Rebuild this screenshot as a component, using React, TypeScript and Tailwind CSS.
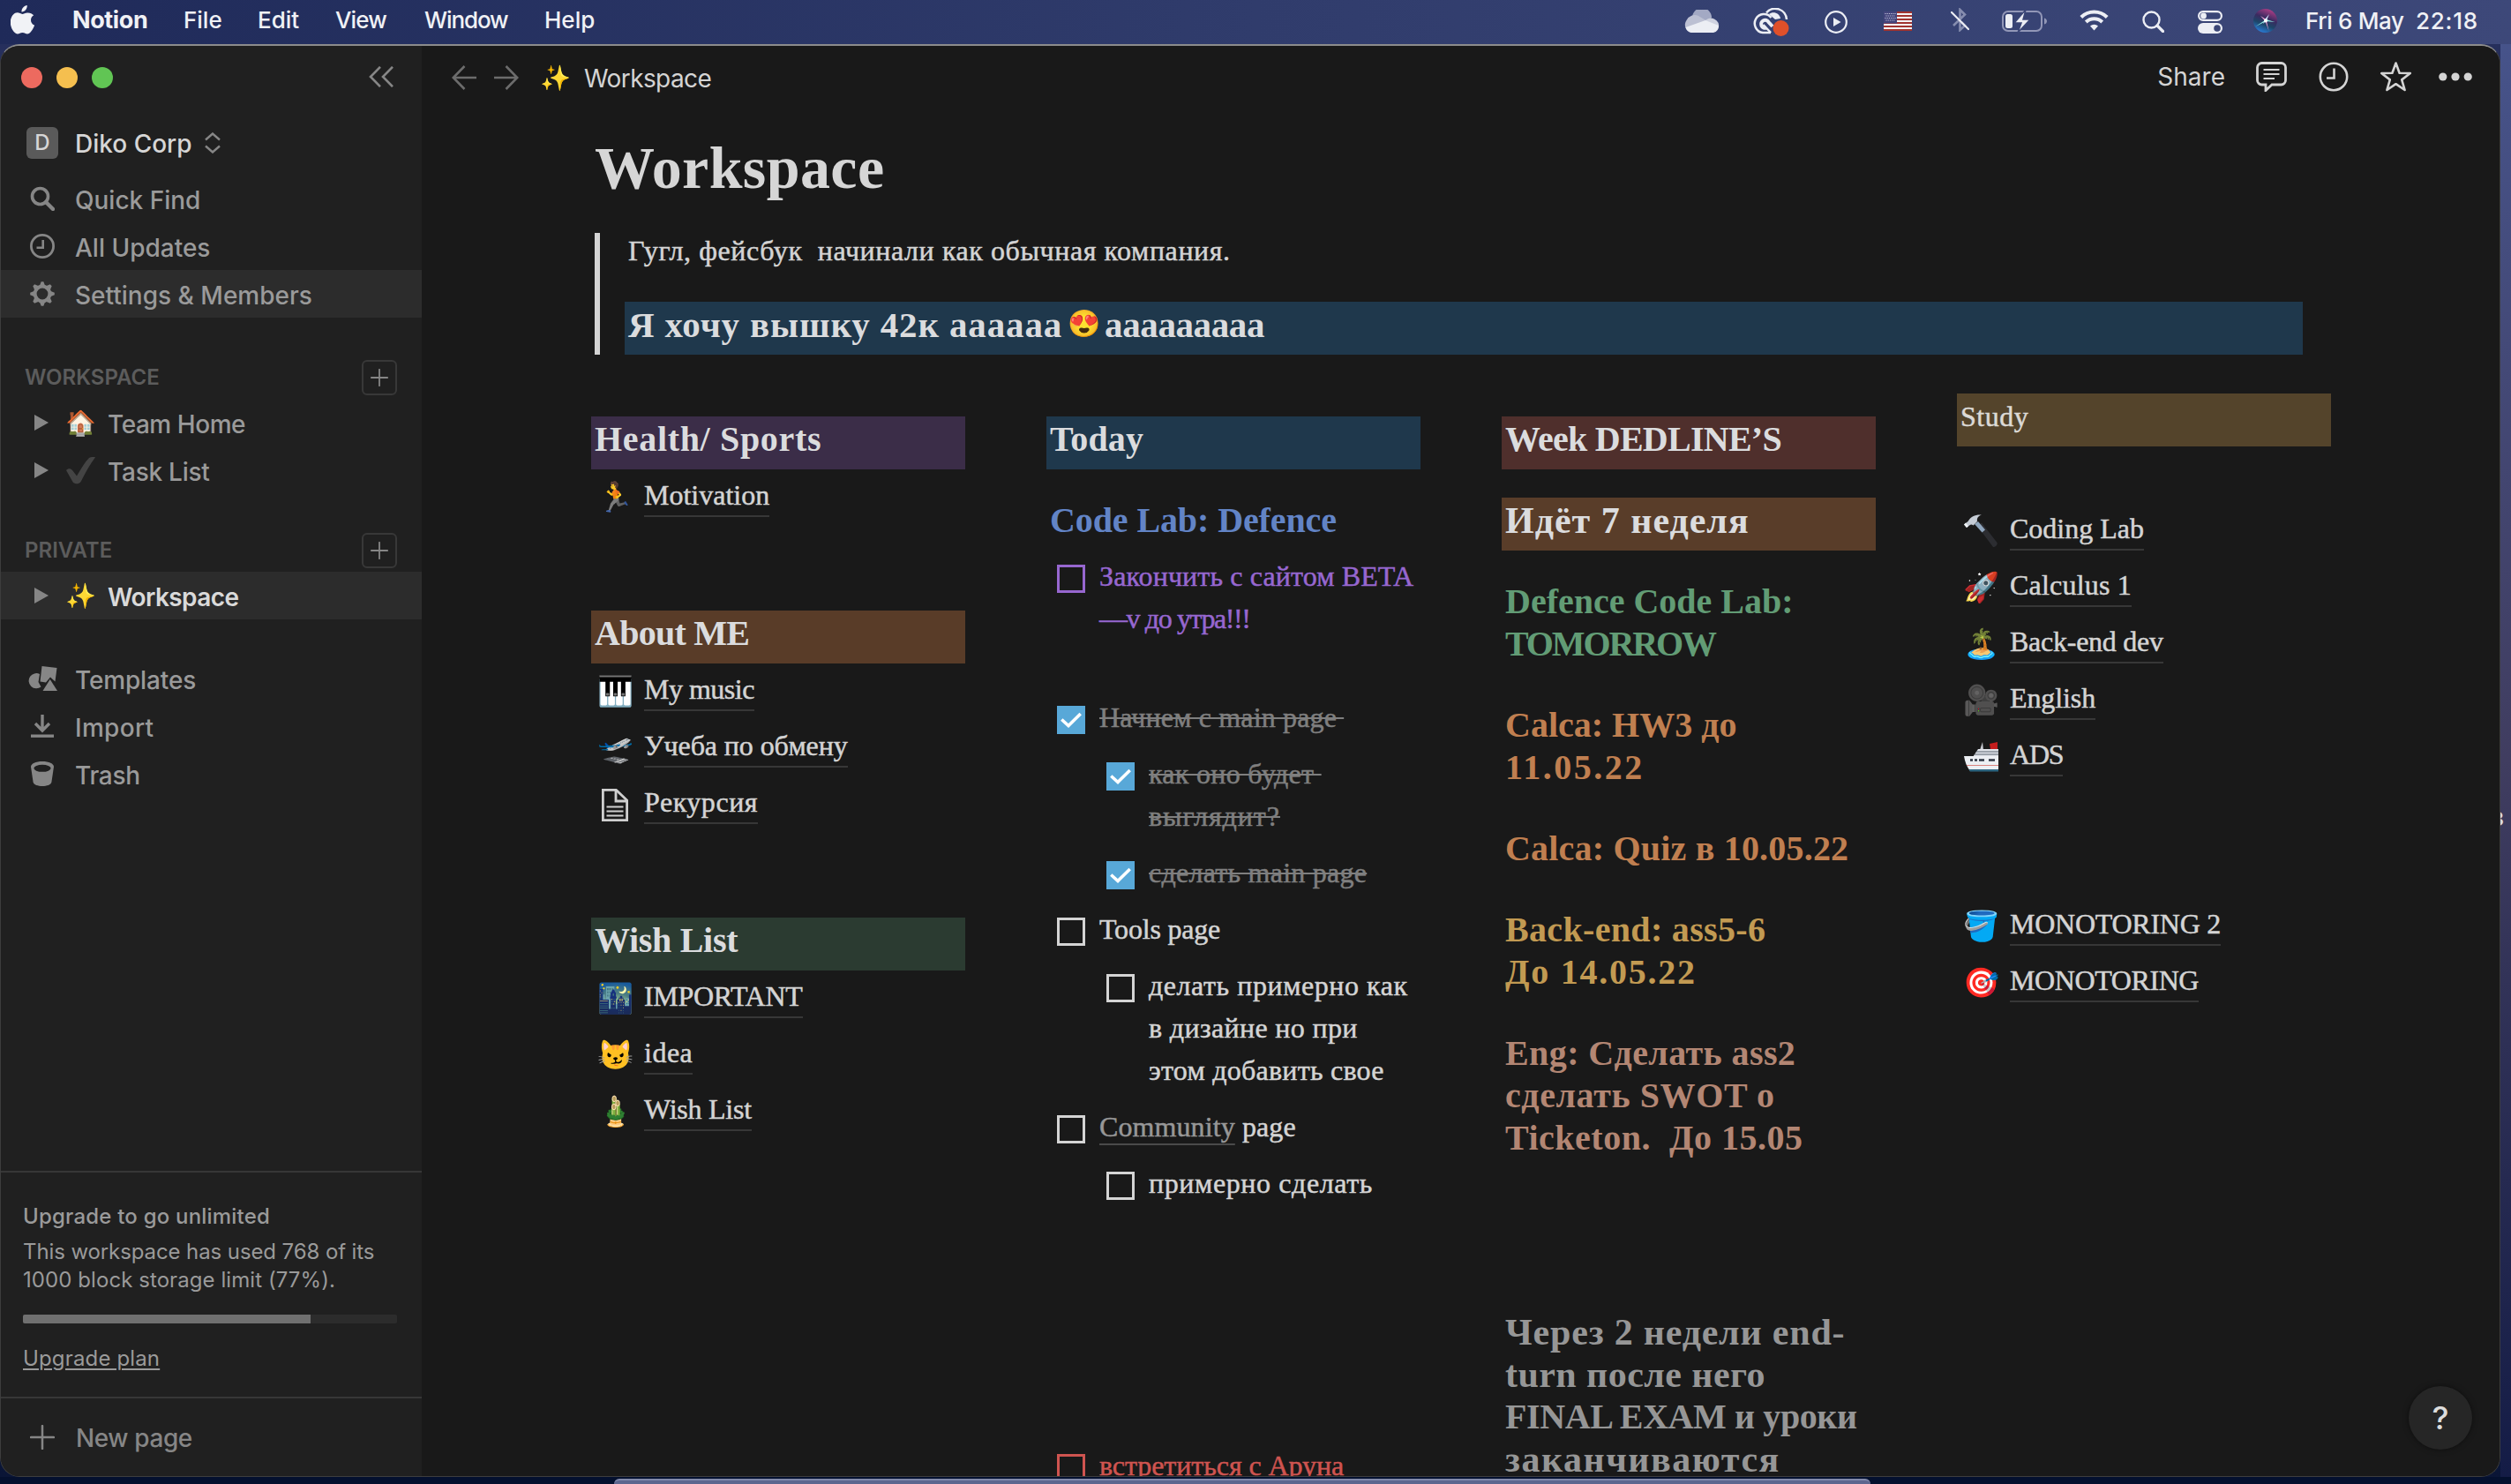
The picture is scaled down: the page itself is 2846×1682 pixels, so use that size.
import type { ReactNode } from 'react';

const SANS = 'font-[Inter,"Liberation_Sans",sans-serif]';
const SERIF = 'font-["Liberation_Serif",serif]';

/* ---------- menu bar icons ---------- */

function AppleLogo() {
  return (
    <svg className="h-[33px] w-[27px]" viewBox="0 0 27 33" fill="#f1f2f6">
      <path d="M18.7 0c.3 2-.5 3.900-1.700 5.300-1.200 1.400-2.900 2.300-4.500 2.200-.3-1.900.6-3.900 1.700-5.100C15.400 1 17.200.1 18.700 0z" />
      <path d="M25.600 11.300c-2 1.200-3.200 3-3.200 5.400 0 2.700 1.600 4.900 4.100 5.900-.6 1.900-1.500 3.700-2.600 5.400-1.500 2.200-3 4.400-5.400 4.400-2.300 0-3-1.400-5.600-1.400-2.600 0-3.500 1.400-5.700 1.400-2.300 0-3.900-2.100-5.500-4.400C.1 25.400-1 21.600-1 18.400.1 12 3.300 8.400 7 8.300c2.300 0 4.200 1.600 5.700 1.600 1.400 0 3.600-1.700 6.300-1.500 2.700.1 5 1.200 6.600 2.900z" transform="translate(.6 0)" />
    </svg>
  );
}

function CloudIcon() {
  return (
    <svg className="h-[26px] w-[40px]" viewBox="0 0 40 26">
      <path d="M9 9a11 11 0 0 1 22 0l-8 6z" fill="#a3a9c4" />
      <path d="M8 26a9 9 0 0 1-5.500-14A10 10 0 0 1 16 7l15 9L12 26z" fill="#bcc0d3" />
      <path d="M24 12a9 9 0 0 1 15 8l-6 3z" fill="#cfd2e0" />
      <path d="M1.500 20 24 12l15 6a8 8 0 0 1-6 8H8a8 8 0 0 1-6.500-6z" fill="#eceef4" />
    </svg>
  );
}

function CreativeCloudIcon() {
  return (
    <svg className="h-[32px] w-[41px]" viewBox="0 0 41 32" fill="none">
      <path d="M15 5.500A13 13 0 0 1 38 13" stroke="#eceef4" strokeWidth="2.500" />
      <path d="M18 7c5-4 12-1 13 5l-6 1z" fill="#eceef4" />
      <path d="M20 28h-9A10.500 10.500 0 1 1 20.500 11" stroke="#eceef4" strokeWidth="2.500" />
      <path d="M20 28l-8.500-9" stroke="#eceef4" strokeWidth="2.500" />
      <path d="M15 22.500a4.500 4.500 0 1 1 2.500-6.500L22 21" stroke="#eceef4" strokeWidth="4" />
      <circle cx="31.500" cy="23" r="9" fill="#e0502a" />
    </svg>
  );
}

function PlayIcon() {
  return (
    <svg className="h-[26px] w-[26px]" viewBox="0 0 26 26">
      <circle cx="13" cy="13" r="11.800" fill="none" stroke="#eceef4" strokeWidth="2.200" />
      <path d="M10 8l8.500 5L10 18z" fill="#eceef4" />
    </svg>
  );
}

function FlagIcon() {
  return (
    <svg className="h-[22px] w-[32px]" viewBox="0 0 32 22">
      <path d="M0 0h32v22H0z" fill="#f4f4f6" />
      <path d="M0 .9h32M0 4.900h32M0 8.900h32M0 12.900h32M0 16.900h32M0 21h32" stroke="#a0332f" strokeWidth="2" />
      <path d="M0 0h15v13.500H0z" fill="#43457c" />
      <path d="M1.500 2.500h12M2.500 5h11M1.500 7.500h12M2.500 10h11" stroke="#d8daea" strokeWidth="1" strokeDasharray="1 1.200" />
    </svg>
  );
}

function BluetoothOffIcon() {
  return (
    <svg className="h-[27px] w-[21px]" viewBox="0 0 21 27" fill="none">
      <path d="M3 20 16 7.500 10.500 2v23L16 20l-4-4" stroke="#868daf" strokeWidth="2.600" />
      <path d="M1 5l19 19" stroke="#eceef4" strokeWidth="2.200" strokeLinecap="round" />
    </svg>
  );
}

function BatteryIcon() {
  return (
    <svg className="h-[26px] w-[51px]" viewBox="0 0 51 26">
      <rect x="1" y="2" width="44" height="22" rx="6" fill="none" stroke="#9297b7" strokeWidth="2" />
      <path d="M48 9.500c2 .5 3 2 3 3.500s-1 3-3 3.500z" fill="#9297b7" />
      <rect x="4" y="5" width="8" height="16" rx="2.500" fill="#eceef4" />
      <path d="M27 0 14 15h8l-4 11 14-15h-8l3-11z" fill="#eceef4" stroke="#3b4676" strokeWidth="1.500" />
    </svg>
  );
}

function WifiIcon() {
  return (
    <svg className="h-[24px] w-[33px]" viewBox="0 0 33 24" fill="none" stroke="#eceef4" strokeWidth="4">
      <path d="M1.800 8.500a21 21 0 0 1 29.400 0" />
      <path d="M7.300 14a13 13 0 0 1 18.400 0" />
      <path d="M12 18.500a6.500 6.500 0 0 1 9 0L16.500 23.500z" fill="#eceef4" stroke="none" />
    </svg>
  );
}

function MenuSearchIcon() {
  return (
    <svg className="h-[25px] w-[25px]" viewBox="0 0 25 25" fill="none" stroke="#eceef4">
      <circle cx="10.500" cy="10.500" r="9" strokeWidth="2.400" />
      <path d="M17 17l6.500 6.500" strokeWidth="3.200" strokeLinecap="round" />
    </svg>
  );
}

function ControlCenterIcon() {
  return (
    <svg className="h-[26px] w-[28px]" viewBox="0 0 28 26">
      <rect x="1.100" y="1.100" width="25.800" height="9.800" rx="4.900" fill="none" stroke="#eceef4" strokeWidth="2.200" />
      <circle cx="6.500" cy="6" r="3.400" fill="#eceef4" />
      <rect x="0" y="14" width="28" height="12" rx="6" fill="#eceef4" />
      <circle cx="22" cy="20" r="3.800" fill="#3b4676" />
    </svg>
  );
}

function SiriIcon() {
  return (
    <svg className="h-[27px] w-[27px]" viewBox="0 0 27 27">
      <defs>
        <linearGradient id="orb" x1=".7" y1="0" x2=".3" y2="1">
          <stop offset="0" stopColor="#b23f88" />
          <stop offset=".4" stopColor="#3a2a60" />
          <stop offset=".65" stopColor="#1d4668" />
          <stop offset="1" stopColor="#2b80e0" />
        </linearGradient>
      </defs>
      <circle cx="13.500" cy="13.500" r="13.500" fill="url(#orb)" />
      <path d="M2.500 20l12-8 10 3-10-1z" fill="#8ff0e6" />
      <path d="M8 8l6.500 4 3 13-4-11z" fill="#f3a0d6" />
      <path d="M18 6l-3 7-4 4 2-5z" fill="#cfe6ff" />
      <circle cx="14" cy="13.500" r="2" fill="#fff" />
    </svg>
  );
}

/* ---------- sidebar icons ---------- */

const GRAY = '#868686';

function SearchIcon() {
  return (
    <svg className="size-7" viewBox="0 0 28 28" fill="none" stroke={GRAY}>
      <circle cx="11.500" cy="11.500" r="9" strokeWidth="3.600" />
      <path d="M18 18l8 8" strokeWidth="4.400" strokeLinecap="round" />
    </svg>
  );
}

function UpdatesIcon() {
  return (
    <svg className="size-7" viewBox="0 0 28 28" fill="none" stroke={GRAY}>
      <circle cx="14" cy="14" r="12.600" strokeWidth="2.800" />
      <path d="M14.700 7v8.700H7.500" strokeWidth="2.600" />
    </svg>
  );
}

const TEETH = ['rotate(0 14 14)', 'rotate(45 14 14)', 'rotate(90 14 14)', 'rotate(135 14 14)', 'rotate(180 14 14)', 'rotate(225 14 14)', 'rotate(270 14 14)', 'rotate(315 14 14)'];

function GearIcon() {
  return (
    <svg className="size-7" viewBox="0 0 28 28" fill={GRAY}>
      <circle cx="14" cy="14" r="8.400" fill="none" stroke={GRAY} strokeWidth="4" />
      {TEETH.map((t) => (
        <path key={t} d="M10.800 5 12.700.2h2.600L17.200 5z" transform={t} />
      ))}
    </svg>
  );
}

function TemplatesIcon() {
  return (
    <svg className="h-7 w-[33px]" viewBox="0 0 33 28" fill={GRAY}>
      <path d="M13 9a8.600 8.600 0 1 0 1.500 14.500L11.500 18z" />
      <path d="M15.500 0 32.500 2 30.500 17.500 25 12.500 20 18.500 13.500 17.500z" />
      <path d="M24.700 15 33 28H16.500z" />
    </svg>
  );
}

function ImportIcon() {
  return (
    <svg className="size-[26px]" viewBox="0 0 26 26" fill="none" stroke={GRAY} strokeWidth="3.400">
      <path d="M13 0v18M5 10l8 8 8-8" />
      <path d="M0 24.200h26" />
    </svg>
  );
}

function TrashIcon() {
  return (
    <svg className="h-7 w-[26px]" viewBox="0 0 26 28">
      <path d="M13 0c7.500 0 13 2.600 13 6l-2.600 17.500C22.800 26.500 18 28 13 28S3.200 26.500 2.600 23.500L0 6c0-3.400 5.500-6 13-6z" fill={GRAY} />
      <ellipse cx="13" cy="7.800" rx="9.600" ry="4" fill="#202020" />
    </svg>
  );
}

function PlusIcon({ size }: { size: string }) {
  return (
    <svg className={size} viewBox="0 0 20 20" stroke={GRAY} strokeWidth="1.800" strokeLinecap="round">
      <path d="M10 .8v18.400M.8 10h18.400" />
    </svg>
  );
}

function Triangle() {
  return (
    <svg className="h-[18px] w-4" viewBox="0 0 16 18" fill={GRAY}>
      <path d="M0 0l16 9-16 9z" />
    </svg>
  );
}

/* ---------- sidebar ---------- */

function NavRow({ icon, label, active, text }: { icon: ReactNode; label: string; active?: boolean; text?: string }) {
  return (
    <div className={`flex h-[54px] items-center ${active ? 'bg-[#2c2c2c]' : ''}`}>
      <div className="ml-[27px] flex w-[40px] justify-center">{icon}</div>
      <span className={`ml-[17px] mt-[3px] text-[28px] font-medium text-[#9a9a9a] ${text ?? ''}`}>{label}</span>
    </div>
  );
}

function TreeRow({ icon, label, active, text }: { icon: ReactNode; label: string; active?: boolean; text: string }) {
  return (
    <div className={`flex h-[54px] items-center ${active ? 'bg-[#2c2c2c]' : ''}`}>
      <div className="ml-[38px]">
        <Triangle />
      </div>
      <div className="ml-[16px] flex w-[40px] justify-center text-[28px] leading-none">{icon}</div>
      <span className={`ml-[11px] mt-[3px] text-[28px] ${text}`}>{label}</span>
    </div>
  );
}

function SectionHeader({ label }: { label: string }) {
  return (
    <div className="flex h-10 items-center justify-between pl-[27px] pr-[28px]">
      <span className="text-[24px] font-semibold text-[#5c5c5c]">{label}</span>
      <div className="flex size-10 items-center justify-center rounded-[6px] border-2 border-[#383838]">
        <PlusIcon size="size-5" />
      </div>
    </div>
  );
}

function Sidebar() {
  return (
    <aside className={`flex w-[477px] shrink-0 flex-col bg-[#202020] ${SANS}`}>
      <div className="flex h-[72px] items-center justify-between pl-[23px] pr-[32px]">
        <div className="flex gap-4">
          <div className="size-6 rounded-full bg-[#ed6a5f]" />
          <div className="size-6 rounded-full bg-[#f5bf4f]" />
          <div className="size-6 rounded-full bg-[#61c554]" />
        </div>
        <svg className="mt-[-3px] h-6 w-7" viewBox="0 0 28 24" fill="none" stroke={GRAY} strokeWidth="2.600">
          <path d="M13 .8 2 12l11 11.200M27 .8 16 12l11 11.200" />
        </svg>
      </div>

      <div className="flex h-[74px] items-center pl-[29px] pt-[2px]">
        <div className="flex size-9 items-center justify-center rounded-[6px] bg-[#5a5a5a] text-[24px] font-medium text-[#d6d6d6]">D</div>
        <span className="ml-[19px] mt-px text-[28px] font-medium text-[#d6d6d6]">Diko Corp</span>
        <svg className="ml-[14px] h-6 w-[18px]" viewBox="0 0 18 24" fill="none" stroke={GRAY} strokeWidth="2.400">
          <path d="M1 8.500 9 1.500l8 7M1 15.500l8 7 8-7" />
        </svg>
      </div>

      <NavRow icon={<SearchIcon />} label="Quick Find" />
      <NavRow icon={<UpdatesIcon />} label="All Updates" />
      <NavRow icon={<GearIcon />} label="Settings & Members" active />

      <div className="mt-12">
        <SectionHeader label="WORKSPACE" />
        <div className="mt-1">
          <TreeRow icon="🏠" label="Team Home" text="font-medium text-[#9a9a9a] tracking-[-0.45px]" />
          <TreeRow
            icon={
              <svg className="h-[31px] w-[33px]" viewBox="0 0 33 31" fill="#444">
                <path d="M0 15c2-2.500 5-2.500 7 0l5 6.500C17 13 21 6 26 1c2-1.200 5-1.200 7-.8-6 8-11 17-16 27-2 4-7 4-9.500 1z" />
              </svg>
            }
            label="Task List"
            text="font-medium text-[#9a9a9a] tracking-[-0.25px]"
          />
        </div>
      </div>

      <div className="mt-11">
        <SectionHeader label="PRIVATE" />
        <div className="mt-1">
          <TreeRow icon="✨" label="Workspace" active text="font-semibold text-[#dadada] tracking-[-0.6px]" />
        </div>
      </div>

      <div className="mt-10">
        <NavRow icon={<TemplatesIcon />} label="Templates" text="tracking-[-0.15px]" />
        <NavRow icon={<ImportIcon />} label="Import" text="tracking-[0.3px]" />
        <NavRow icon={<TrashIcon />} label="Trash" text="tracking-[-0.3px]" />
      </div>

      <div className="mt-auto h-[256px] border-t-2 border-[#373737] pl-[25px] pt-[34px] text-[24px] leading-8 text-[#9a9a9a]">
        <div className="font-medium tracking-[0.2px]">Upgrade to go unlimited</div>
        <div className="mt-2 whitespace-nowrap tracking-[-0.1px]">This workspace has used 768 of its</div>
        <div className="whitespace-nowrap tracking-[0.07px]">1000 block storage limit (77%).</div>
        <div className="mt-[23px] h-[10px] w-[424px] overflow-hidden rounded-[2px] bg-[#2c2c2c]">
          <div className="h-full w-[77%] bg-[#707070]" />
        </div>
        <div className="mt-6 tracking-[0.15px] underline decoration-2 underline-offset-[3px]">Upgrade plan</div>
      </div>
      <div className="flex h-[90px] items-center border-t-2 border-[#373737] pl-[33px] text-[28px] font-medium text-[#868686]">
        <PlusIcon size="size-7" />
        <span className="ml-[24px] mt-0.5 tracking-[-0.4px]">New page</span>
      </div>
    </aside>
  );
}

/* ---------- page blocks ---------- */

function Heading({ lines, color = 'text-[#dbdcde]', bg = '' }: { lines: [string, string][]; color?: string; bg?: string }) {
  return (
    <div className={`pb-[10px] pl-1 pt-[2px] text-[40px] font-bold leading-[48px] ${color} ${bg}`}>
      {lines.map(([text, tracking]) => (
        <div key={text} className={`whitespace-pre ${tracking}`}>
          {text}
        </div>
      ))}
    </div>
  );
}

function PageLink({ icon, label, text = '' }: { icon: ReactNode; label: string; text?: string }) {
  return (
    <div className="flex h-16 items-start">
      <div className="ml-[6px] mt-[12px] flex h-10 w-[42px] items-center justify-center text-[33px] leading-none">{icon}</div>
      <span className={`ml-3 mt-[5px] h-[49px] whitespace-nowrap border-b-2 border-[#373737] text-[32px] leading-[48px] text-[#d4d4d4] [-webkit-text-stroke:0.5px] ${text}`}>{label}</span>
    </div>
  );
}

function Todo({ lines, checked, nested, box = 'border-[#d4d4d4]', color = 'text-[#d4d4d4]' }: { lines: [ReactNode, string][]; checked?: boolean; nested?: boolean; box?: string; color?: string }) {
  return (
    <div className={`flex items-start pb-[19px] ${nested ? 'pl-[68px]' : 'pl-[12px]'}`}>
      {checked ? (
        <div className="mt-2 flex size-8 shrink-0 items-center justify-center bg-[#58a8d8]">
          <svg className="h-[18px] w-6" viewBox="0 0 24 18" fill="none" stroke="#fff" strokeWidth="3.600">
            <path d="M1.300 8.500 9 15.500 22.700 2" />
          </svg>
        </div>
      ) : (
        <div className={`mt-2 size-8 shrink-0 border-[3px] ${box}`} />
      )}
      <div className={`-mt-[3px] ml-4 text-[32px] leading-[48px] [-webkit-text-stroke:0.5px] ${checked ? 'text-[#7f7f7f]' : color}`}>
        {lines.map(([text, tracking], i) => (
          <div key={i} className={`whitespace-pre ${tracking}`}>
            {checked ? <span className="line-through decoration-2">{text}</span> : text}
          </div>
        ))}
      </div>
    </div>
  );
}

function DocIcon() {
  return (
    <svg className="h-[37px] w-[30px]" viewBox="0 0 30 37" fill="none" stroke="#cfcfcf" strokeWidth="2.800">
      <path d="M1.400 1.400h15L28.600 13v22.600H1.400z" />
      <path d="M16 1.400V14h12.600" />
      <path d="M5.500 20.500h19M5.500 25.500h19M5.500 30.500h19" strokeWidth="2.200" />
    </svg>
  );
}

function HammerIcon() {
  return (
    <svg className="h-[38px] w-[40px]" viewBox="0 0 40 38">
      <path d="M16 13 21 9.500 38.500 32c1 2-2 5.500-4.500 5z" fill="#2c2d31" />
      <path d="M13 11l4-3 8 9.500-3.500 3z" fill="#8fa6bd" />
      <path d="M1 11.500 5.500 8C9 2 14 0 21 0.500 17 2 15.500 4 16 8l-4.500 4.500C9 10.500 8 11.500 4 15z" fill="#c5ccd5" />
      <path d="M1 11.500 3 9.500l3 4-2 1.500z" fill="#eef1f4" />
    </svg>
  );
}

function ShipIcon() {
  return (
    <svg className="h-[36px] w-[40px]" viewBox="0 0 40 36">
      <path d="M30 3l9-2v8h-8z" fill="#c41d1d" />
      <path d="M19 10l3-9 1 9z" fill="#c9ccd2" />
      <path d="M17 9h23v9H11z" fill="#dfe2e8" />
      <path d="M15 12h25M13 15h27" stroke="#5b6470" strokeWidth="1.200" />
      <path d="M1 17h39v17H8C4 29 2 23 1 17z" fill="#eceff3" />
      <path d="M8 21.500h3M13 21.500h3M18 21.500h6M29 21.500h7" stroke="#2b3340" strokeWidth="2.600" />
      <path d="M4 27.500h36" stroke="#d9837f" strokeWidth="1" />
      <path d="M6.500 32H40v2.500H8z" fill="#2c6580" />
    </svg>
  );
}

function HealthColumn() {
  return (
    <div className="w-[424px] shrink-0 pt-[26px]">
      <Heading lines={[['Health/ Sports', 'tracking-[0.67px]']]} bg="bg-[#3b2d48]" />
      <PageLink icon="🏃" label="Motivation" />
      <div className="mt-24">
        <Heading lines={[['About ME', 'tracking-[-0.75px]']]} bg="bg-[#593c28]" />
        <PageLink icon="🎹" label="My music" text="tracking-[-0.5px]" />
        <PageLink icon="🛫" label="Учеба по обмену" text="tracking-[-0.1px]" />
        <PageLink icon={<DocIcon />} label="Рекурсия" text="tracking-[0.55px]" />
      </div>
      <div className="mt-24">
        <Heading lines={[['Wish List', 'tracking-[-0.3px]']]} bg="bg-[#2b3b31]" />
        <PageLink icon="🌃" label="IMPORTANT" text="tracking-[-0.3px]" />
        <PageLink icon="😼" label="idea" text="tracking-[0.5px]" />
        <PageLink icon="🎍" label="Wish List" text="tracking-[-0.25px]" />
      </div>
    </div>
  );
}

function TodayColumn() {
  return (
    <div className="w-[424px] shrink-0 pt-[26px]">
      <Heading lines={[['Today', 'tracking-[0.2px]']]} bg="bg-[#1f384c]" />
      <div className="mt-8">
        <Heading lines={[['Code Lab: Defence', 'tracking-[-0.1px]']]} color="text-[#6284c6]" />
      </div>
      <div className="mt-2">
        <Todo
          box="border-[#9767d0]"
          color="text-[#9767d0]"
          lines={[
            ['Закончить с сайтом BETA', 'tracking-[0.12px]'],
            ['—v до утра!!!', 'tracking-[-1.4px]'],
          ]}
        />
      </div>
      <div className="mt-12">
        <Todo checked lines={[['Начнем с main page ', 'tracking-[0.15px]']]} />
        <Todo
          checked
          nested
          lines={[
            ['как оно будет ', 'tracking-[0.3px]'],
            ['выглядит?', 'tracking-[0.95px]'],
          ]}
        />
        <Todo checked nested lines={[['сделать main page', 'tracking-[0.25px]']]} />
        <Todo lines={[['Tools page', 'tracking-[-0.2px]']]} />
        <Todo
          nested
          lines={[
            ['делать примерно как', 'tracking-[0.55px]'],
            ['в дизайне но при', 'tracking-[0.35px]'],
            ['этом добавить свое', 'tracking-[0.25px]'],
          ]}
        />
        <Todo
          lines={[
            [
              <>
                <span className="text-[#979797] underline decoration-[#4a4a4a] decoration-2 underline-offset-[8px]">Community</span> page
              </>,
              'tracking-[0.1px]',
            ],
          ]}
        />
        <Todo nested lines={[['примерно сделать', 'tracking-[0.6px]']]} />
      </div>
      <div className="mt-[256px]">
        <Todo box="border-[#cf5450]" color="text-[#cf5450]" lines={[['встретиться с Аруна', 'tracking-[-0.07px]']]} />
      </div>
    </div>
  );
}

function WeekColumn() {
  return (
    <div className="flex w-[424px] shrink-0 flex-col gap-8 pt-[26px]">
      <Heading lines={[['Week DEDLINE’S', 'tracking-[-0.75px]']]} bg="bg-[#4f2f2c]" />
      <Heading lines={[['Идёт 7 неделя', 'text-[42px] tracking-[1px]']]} bg="bg-[#593d29]" />
      <Heading
        color="text-[#629c75]"
        lines={[
          ['Defence Code Lab:', ''],
          ['TOMORROW', 'tracking-[-2.1px]'],
        ]}
      />
      <Heading
        color="text-[#c07f50]"
        lines={[
          ['Calca: HW3 до', ''],
          ['11.05.22', 'tracking-[2.5px]'],
        ]}
      />
      <Heading color="text-[#c07f50]" lines={[['Calca: Quiz в 10.05.22', 'tracking-[0.2px]']]} />
      <Heading
        color="text-[#c29a52]"
        lines={[
          ['Back-end: ass5-6', 'tracking-[0.33px]'],
          ['До 14.05.22', 'tracking-[1.75px]'],
        ]}
      />
      <Heading
        color="text-[#b38673]"
        lines={[
          ['Eng: Сделать ass2', 'tracking-[0.4px]'],
          ['сделать SWOT о', 'tracking-[0.6px]'],
          ['Ticketon.  До 15.05', 'tracking-[0.5px]'],
        ]}
      />
      <div className="mt-32">
        <Heading
          color="text-[#969696]"
          lines={[
            ['Через 2 недели end-', 'text-[42px] tracking-[0.8px]'],
            ['turn после него', 'text-[42px] tracking-[0.45px]'],
            ['FINAL EXAM и уроки', 'tracking-[-0.4px]'],
            ['заканчиваются', 'text-[42px] tracking-[1.5px]'],
          ]}
        />
      </div>
    </div>
  );
}

function StudyColumn() {
  return (
    <div className="w-[424px] shrink-0">
      <div className="h-[60px] bg-[#54442b] pl-1 pt-[2px] text-[32px] leading-[48px] tracking-[0.5px] text-[#dcdad6] [-webkit-text-stroke:0.5px]">Study</div>
      <div className="mt-16">
        <PageLink icon={<HammerIcon />} label="Coding Lab" />
        <PageLink icon="🚀" label="Calculus 1" text="tracking-[0.2px]" />
        <PageLink icon="🏝️" label="Back-end dev" text="tracking-[-0.25px]" />
        <PageLink icon="🎥" label="English" text="tracking-[-0.1px]" />
        <PageLink icon={<ShipIcon />} label="ADS" text="tracking-[-1.2px]" />
      </div>
      <div className="mt-32">
        <PageLink icon="🪣" label="MONOTORING 2" text="tracking-[-0.25px]" />
        <PageLink icon="🎯" label="MONOTORING" text="tracking-[-0.4px]" />
      </div>
    </div>
  );
}

function TopBar() {
  return (
    <div className={`flex h-[72px] shrink-0 items-center pl-[34px] pr-[31px] text-[28px] text-[#d4d4d4] ${SANS}`}>
      <svg className="h-7 w-7" viewBox="0 0 28 28" fill="none" stroke="#6c6c6c" strokeWidth="2.600">
        <path d="M28 14H2M14.500 1 1.800 14l12.700 13" />
      </svg>
      <svg className="ml-5 h-7 w-7" viewBox="0 0 28 28" fill="none" stroke="#6c6c6c" strokeWidth="2.600">
        <path d="M0 14h26M13.500 1l12.700 13-12.700 13" />
      </svg>
      <span className="ml-[21px] flex w-[40px] justify-center text-[28px] leading-none">✨</span>
      <span className="ml-[13px] mt-px tracking-[-0.6px]">Workspace</span>
      <div className="mb-[3px] ml-auto flex items-center">
        <span className="mr-[35px]">Share</span>
        <svg className="h-[34px] w-[35px]" viewBox="0 0 35 34" fill="none" stroke="#d4d4d4">
          <path d="M6.500 1.500h22a5 5 0 0 1 5 5v14.500a5 5 0 0 1-5 5H18l-7 6.500V26H6.500a5 5 0 0 1-5-5V6.500a5 5 0 0 1 5-5z" strokeWidth="2.800" />
          <path d="M8.500 9h18M8.500 14h18M8.500 19h12.500" strokeWidth="2.200" />
        </svg>
        <svg className="ml-[36px] h-[34px] w-[34px]" viewBox="0 0 34 34" fill="none" stroke="#d4d4d4" strokeWidth="2.600">
          <circle cx="17" cy="17" r="15.200" />
          <path d="M17.500 7.500V18.500H9" />
        </svg>
        <svg className="ml-[35px] h-[36px] w-[37px]" viewBox="0 0 37 36" fill="none" stroke="#d4d4d4" strokeWidth="2.600" strokeLinejoin="round">
          <path d="M18.500 2.500 22.600 13.700 34.800 14 25.200 21.400 28.600 33 18.500 26.200 8.400 33 11.800 21.400 2.200 14 14.400 13.700z" />
        </svg>
        <svg className="ml-[30px] h-[10px] w-[38px]" viewBox="0 0 38 10" fill="#d4d4d4">
          <circle cx="4.800" cy="5" r="4.600" />
          <circle cx="19" cy="5" r="4.600" />
          <circle cx="33.200" cy="5" r="4.600" />
        </svg>
      </div>
    </div>
  );
}

function Main() {
  return (
    <main className={`relative flex min-w-0 flex-1 flex-col overflow-hidden bg-[#191919] ${SERIF}`}>
      <TopBar />
      <div className="h-0 flex-1 pl-[192px] pt-[26px]">
        <h1 className="pl-1 text-[68px] font-bold leading-[80px] tracking-[0.4px] text-[#d6d6d6]">Workspace</h1>
        <div className="ml-1 mt-[34px] flex h-[138px] w-[1936px]">
          <div className="w-[6px] bg-[#d4d4d4]" />
          <div className="ml-[28px] flex-1">
            <div className="-mt-[4px] h-[48px] whitespace-pre pl-1 text-[32px] leading-[48px] tracking-[0.58px] text-[#d4d4d4] [-webkit-text-stroke:0.5px]">
              Гугл, фейсбук  начинали как обычная компания.
            </div>
            <div className="mt-[34px] flex h-[60px] bg-[#1f384c] pl-1 pt-[2px] text-[41px] font-bold leading-[48px] text-[#dbdcde]">
              <span className="tracking-[0.85px]">Я хочу вышку 42к аааааа</span>
              <span className="ml-[4px] -mt-px w-[40px] text-center text-[30px] font-normal">😍</span>
              <span className="ml-[4px] tracking-[-0.4px]">ааааааааа</span>
            </div>
          </div>
        </div>
        <div className="mt-[44px] flex gap-[92px]">
          <HealthColumn />
          <TodayColumn />
          <WeekColumn />
          <StudyColumn />
        </div>
      </div>
      <div className={`absolute bottom-[30px] right-[31px] flex size-[72px] items-center justify-center rounded-full bg-[#262626] text-[36px] font-medium text-[#dcdcdc] shadow-[0_0_6px_rgba(0,0,0,0.5)] ${SANS}`}>
        ?
      </div>
    </main>
  );
}

function MenuBar() {
  return (
    <header className={`flex h-[50px] shrink-0 items-center bg-linear-to-r from-[#1f2a59] via-[#303c6c] to-[#3d4879] pb-[2px] text-[26px] font-medium text-[#f0f1f5] ${SANS}`}>
      <div className="mb-[3px] ml-[12px]">
        <AppleLogo />
      </div>
      <nav className="mb-px flex items-baseline">
        <span className="ml-[43px] w-[126px] text-[27px] font-bold tracking-[-0.4px]">Notion</span>
        <span className="w-[84px]">File</span>
        <span className="w-[88px]">Edit</span>
        <span className="w-[101px] tracking-[-0.9px]">View</span>
        <span className="w-[136px] tracking-[-1.1px]">Window</span>
        <span>Help</span>
      </nav>
      <div className="ml-auto flex items-center pr-[37px]">
        <CloudIcon />
        <div className="ml-[38px] mt-px">
          <CreativeCloudIcon />
        </div>
        <div className="ml-[40px] mt-[2px]">
          <PlayIcon />
        </div>
        <div className="ml-[41px]">
          <FlagIcon />
        </div>
        <div className="ml-[44px] mb-[4px]">
          <BluetoothOffIcon />
        </div>
        <div className="ml-[37px]">
          <BatteryIcon />
        </div>
        <div className="ml-[37px] mb-[2px]">
          <WifiIcon />
        </div>
        <div className="ml-[38px]">
          <MenuSearchIcon />
        </div>
        <div className="ml-[38px] mt-[2px]">
          <ControlCenterIcon />
        </div>
        <div className="ml-[35px] mb-px">
          <SiriIcon />
        </div>
        <div className="mb-[2px] ml-[32px] flex w-[196px] justify-between whitespace-nowrap">
          <span className="tracking-[-0.35px]">Fri 6 May</span>
          <span className="tracking-[0.8px]">22:18</span>
        </div>
      </div>
    </header>
  );
}

export default function App() {
  return (
    <div className="flex h-[1682px] w-[2846px] flex-col overflow-hidden bg-[#04102e]">
      <MenuBar />
      <div className="flex h-[1624px] bg-linear-to-b from-[#262f5c] from-0% via-[#2b3765] via-35% to-[#0a1536] to-100%">
        <div className="flex w-[2834px] overflow-hidden rounded-[22px] border border-t-2 border-[#3d3d3d] border-t-[#8c8c8c] bg-[#191919]">
          <Sidebar />
          <Main />
        </div>
        <div className="flex-1 overflow-hidden bg-linear-to-b from-[#46538a] from-0% via-[#403d60] via-50% to-[#141c46] to-100%">
          <div className={`-ml-[10px] mt-[864px] text-[22px] font-semibold leading-[28px] text-[#d9dae2] ${SANS}`}>3</div>
        </div>
      </div>
      <div className="flex flex-1 justify-center pr-[30px] pt-[2px]">
        <div className="w-[1424px] rounded-t-[24px] border-t-2 border-[#8289ab] bg-[#5d668f]" />
      </div>
    </div>
  );
}
